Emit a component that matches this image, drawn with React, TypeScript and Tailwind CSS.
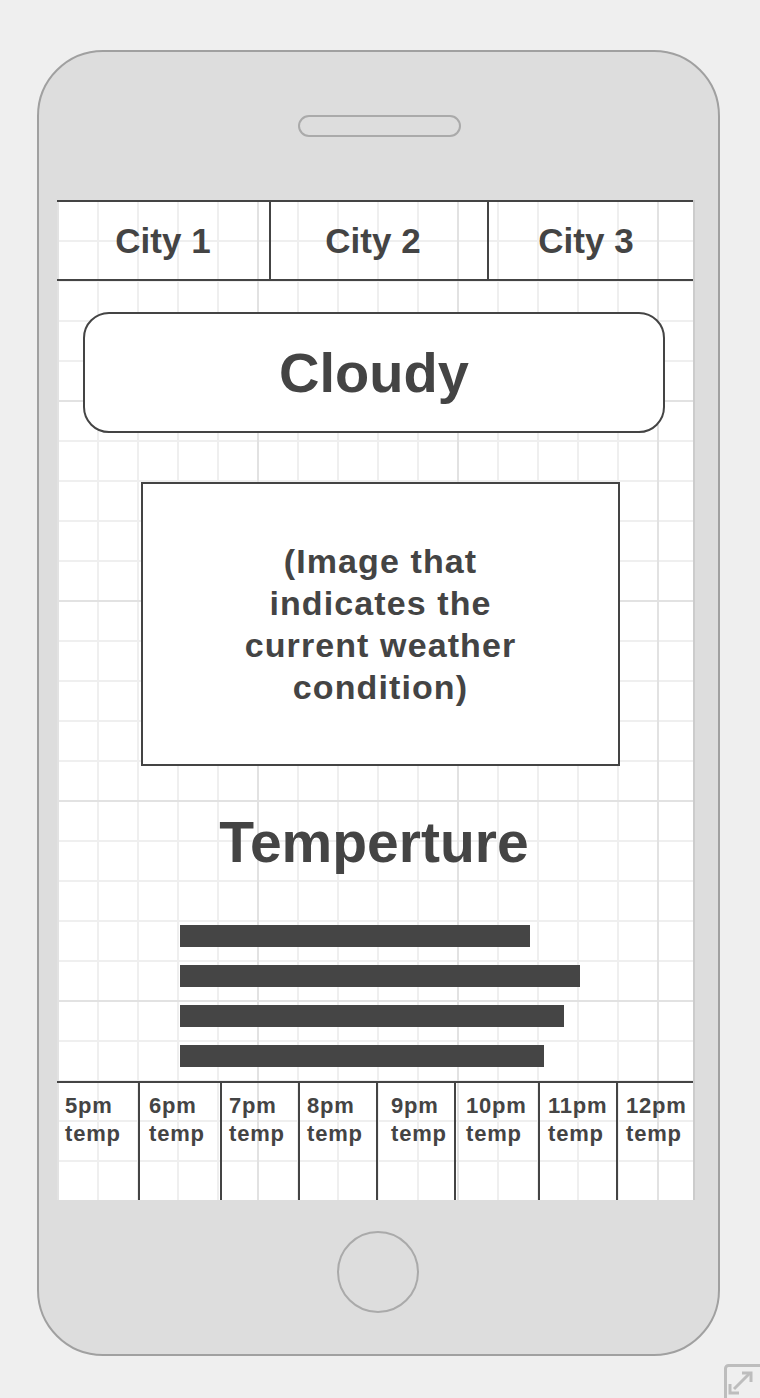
import React from "react";

const font = { fontFamily: '"Liberation Sans", Arial, Helvetica, sans-serif' };

const cities = [
  { name: "City 1", cls: "w-[214px]" },
  { name: "City 2", cls: "w-[218px] pr-[12px]" },
  { name: "City 3", cls: "flex-1 pr-[10px]" },
];

const bars = ["w-[350px]", "w-[400px]", "w-[384px]", "w-[364px]"];

const hours = [
  { label: "5pm", cls: "w-[83px] pl-[8px]" },
  { label: "6pm", cls: "w-[82px] pl-[9px]" },
  { label: "7pm", cls: "w-[78px] pl-[7px]" },
  { label: "8pm", cls: "w-[78px] pl-[7px]" },
  { label: "9pm", cls: "w-[78px] pl-[13px]" },
  { label: "10pm", cls: "w-[84px] pl-[10px]" },
  { label: "11pm", cls: "w-[78px] pl-[8px]" },
  { label: "12pm", cls: "flex-1 pl-[8px]" },
];

const ResizeIcon: React.FC = () => (
  <svg
    className="absolute left-[724px] top-[1364px]"
    width="36"
    height="34"
    viewBox="0 0 36 34"
    fill="none"
    stroke="#bdbdbd"
  >
    <rect x="1.5" y="1.5" width="40" height="40" rx="3" strokeWidth="3" />
    <path d="M10 25 L26 9" strokeWidth="3" />
    <path d="M18 9 H27 V18" strokeWidth="3" fill="none" />
    <path d="M6 20 V29 H15" strokeWidth="3" fill="none" />
  </svg>
);

const App: React.FC = () => {
  return (
    <div
      className="relative w-[760px] h-[1398px] overflow-hidden bg-[#efefef] pt-[50px] pl-[37px]"
      style={font}
    >
      {/* Phone body */}
      <div className="flex flex-col w-[683px] h-[1306px] rounded-[66px] border-2 border-[#a0a0a0] bg-[#dddddd]">
        {/* Speaker */}
        <div className="mt-[63px] ml-[259px] w-[163px] h-[22px] rounded-full border-2 border-[#aaaaaa]" />

        {/* Screen */}
        <div className="mt-[63px] ml-[18px] flex flex-col w-[638px] h-[1000px] bg-white bg-[linear-gradient(to_right,#e2e2e2_2px,transparent_2px),linear-gradient(to_bottom,#e2e2e2_2px,transparent_2px),linear-gradient(to_right,#efefef_2px,transparent_2px),linear-gradient(to_bottom,#efefef_2px,transparent_2px)] bg-size-[200px_200px,200px_200px,40px_40px,40px_40px] border-r-2 border-[#cccccc] text-[#444444]">
          {/* City tabs */}
          <div className="flex h-[81px] border-t-2 border-b-2 border-[#444444]">
            {cities.map((c, i) => (
              <div
                key={c.name}
                className={`${c.cls} flex items-center justify-center ${
                  i < 2 ? "border-r-2 border-[#444444]" : ""
                }`}
              >
                <span className="text-[35px] font-bold leading-none">{c.name}</span>
              </div>
            ))}
          </div>

          {/* Condition */}
          <div className="mt-[31px] ml-[26px] w-[582px] h-[121px] flex items-center justify-center rounded-[26px] border-2 border-[#444444] bg-white">
            <span className="text-[56px] font-bold leading-none">Cloudy</span>
          </div>

          {/* Image placeholder */}
          <div className="mt-[49px] ml-[84px] w-[479px] h-[284px] flex items-center justify-center border-2 border-[#444444] bg-white">
            <p className="text-center text-[34px] font-bold leading-[42px] tracking-[1.1px]">
              (Image that
              <br />
              indicates the
              <br />
              current weather
              <br />
              condition)
            </p>
          </div>

          {/* Temperature */}
          <h1 className="mt-[48px] text-center text-[57px] font-bold leading-[56px] pr-[2px]">
            Temperture
          </h1>

          <div className="mt-[55px] ml-[123px] flex flex-col gap-[18px]">
            {bars.map((w, i) => (
              <div key={i} className={`${w} h-[22px] bg-[#454545]`} />
            ))}
          </div>

          {/* Hourly */}
          <div className="mt-[14px] flex flex-1 border-t-2 border-[#444444]">
            {hours.map((h, i) => (
              <div
                key={h.label}
                className={`${h.cls} pt-[9px] text-[22px] font-bold leading-[28px] tracking-[0.8px] ${
                  i < hours.length - 1 ? "border-r-2 border-[#444444]" : ""
                }`}
              >
                <div>{h.label}</div>
                <div>temp</div>
              </div>
            ))}
          </div>
        </div>

        {/* Home button */}
        <div className="mt-[31px] ml-[298px] w-[82px] h-[82px] rounded-full border-2 border-[#aaaaaa]" />
      </div>

      <ResizeIcon />
    </div>
  );
};

export default App;
